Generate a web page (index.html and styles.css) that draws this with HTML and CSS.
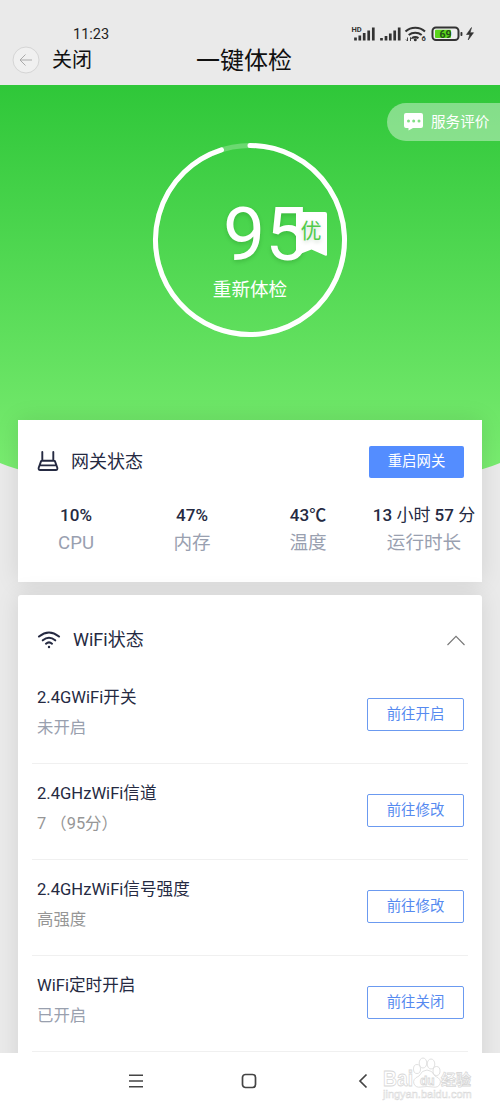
FILE: index.html
```html
<!DOCTYPE html>
<html lang="zh-CN">
<head>
<meta charset="utf-8">
<title>一键体检</title>
<link rel="stylesheet" href="styles.css">
</head>
<body>
<div class="screen">
  <header class="topbar">
    <div class="status">
      <span class="clock">11:23</span>
      <svg class="status-icons" width="126" height="20" viewBox="0 0 126 20">
        <g fill="none" stroke="#333" stroke-width="2.700">
          <path d="M4.500 13.500v3M8.800 11.500v5M13.200 9v7.500M17.700 6.500v10M22.300 3.500v13"/>
          <path d="M30.500 14v2.500M35 12v4.500M39.300 9.500v7M43.700 6.500v10M48.200 3.500v13"/>
        </g>
        <text class="tiny" x=".5" y="7.800">HD</text>
        <g fill="none" stroke="#333" stroke-width="2.100">
          <path d="M54.500 7.500a14.500 14.500 0 0 1 19.500 0M57.700 11a10.500 10.500 0 0 1 13 0M61 14.200a6 6 0 0 1 6.500 0"/>
        </g>
        <circle cx="64.300" cy="15.700" r="1.500" fill="#333"/>
        <path d="M56.500 13.500v3.500l-1.500-1.500M59.500 17v-3.500l1.300 1.500" stroke="#333" stroke-width=".9" fill="none"/>
        <text class="tiny" x="70.500" y="17">6</text>
        <rect x="81.500" y="3.500" width="26" height="12.500" rx="3.500" fill="#eee" stroke="#333" stroke-width="2"/>
        <rect x="84" y="5.700" width="16" height="8.200" rx="1" fill="#5ad51b"/>
        <rect x="109.500" y="8" width="1.900" height="4" rx=".8" fill="#333"/>
        <text class="level" x="88.500" y="13.500">69</text>
        <path d="M120.500 3.500l-5 7h3.300l-1.600 5.500 5.300-7.300h-3.400z" fill="#333" stroke="#333" stroke-width=".6"/>
      </svg>
    </div>
    <nav class="nav">
      <div class="nav-left">
        <svg width="28" height="28" viewBox="0 0 28 28" fill="none">
          <circle cx="14" cy="14" r="13" fill="#f0f0f0" stroke="#d5d5d5"/>
          <path d="M20 14H8.500M13.500 8.500L8 14l5.500 5.500" stroke="#aaa"/>
        </svg>
        <span class="close">关闭</span>
      </div>
      <h1 class="title">一键体检</h1>
    </nav>
  </header>
  <main class="content">
    <section class="hero">
      <div class="rate">
        <svg width="20" height="18" viewBox="0 0 20 18">
          <path d="M2 0h15q2 0 2 2v11q0 2-2 2H9l-4.500 2.500V15H2q-2 0-2-2V2q0-2 2-2z" fill="#fff"/>
          <g fill="#82df85"><circle cx="4.500" cy="8" r="1.500"/><circle cx="9.700" cy="8" r="1.500"/><circle cx="15" cy="8" r="1.500"/></g>
        </svg>
        <span>服务评价</span>
      </div>
      <div class="gauge">
        <svg class="ring" width="196" height="196" viewBox="0 0 196 196" fill="none" stroke="#fff" stroke-width="5">
          <circle cx="98" cy="98" r="94.500" stroke-opacity=".25"/>
          <path d="M98 3.500A94.500 94.500 0 1 1 69.500 7.900" stroke-linecap="round"/>
        </svg>
        <div class="score">95
          <svg class="ribbon" width="31" height="46" viewBox="0 0 31 46">
            <path d="M0 0h29q2 0 2 2v40.500q0 2-2 1L15.500 37.500 1.500 43Q0 44 0 42z" fill="#fff"/>
            <text class="grade" x="4.500" y="26">优</text>
          </svg>
        </div>
        <div class="again">重新体检</div>
      </div>
    </section>
    <section class="card gateway">
      <div class="card-head">
        <svg class="head-icon router" width="22" height="20" viewBox="0 0 22 20" fill="none" stroke="#252a42" stroke-width="1.900" stroke-linecap="round" stroke-linejoin="round">
          <path d="M5.300 1v8.500M16.300 1v8.500M5 9.800h12q.8 0 1.100.8l2.200 6.200q.5 2.200-1.500 2.200H3.200q-2 0-1.500-2.200l2.200-6.200q.3-.8 1.100-.8zM3.500 14.400h15"/>
        </svg>
        <h2 class="card-title">网关状态</h2>
        <button class="btn primary">重启网关</button>
      </div>
      <div class="stats">
        <div class="stat"><b>10%</b><span>CPU</span></div>
        <div class="stat"><b>47%</b><span>内存</span></div>
        <div class="stat"><b>43℃</b><span>温度</span></div>
        <div class="stat"><b>13 <i>小时</i> 57 <i>分</i></b><span>运行时长</span></div>
      </div>
    </section>
    <section class="card wifi">
      <div class="card-head wifi-head">
        <svg class="head-icon" width="24" height="18" viewBox="0 0 24 18" fill="none" stroke="#252a42" stroke-width="2.100" stroke-linecap="round">
          <path d="M2 5.500Q12-2.500 22 5.500M5.800 9.300Q12 4.200 18.200 9.300M9 12.700Q12 10.200 15 12.700"/>
          <circle cx="12" cy="16" r="1.200" fill="#252a42" stroke="none"/>
        </svg>
        <h2 class="card-title">WiFi状态</h2>
        <svg class="chevron" width="18" height="11" viewBox="0 0 18 11" fill="none" stroke="#777" stroke-width="1.100"><path d="M.5 10L9 1.300 17.500 10"/></svg>
      </div>
      <ul class="list">
        <li class="row"><div><p class="name">2.4GWiFi开关</p><p class="value">未开启</p></div><button class="btn outline">前往开启</button></li>
        <li class="row"><div><p class="name">2.4GHzWiFi信道</p><p class="value gray">7 （95分）</p></div><button class="btn outline">前往修改</button></li>
        <li class="row"><div><p class="name">2.4GHzWiFi信号强度</p><p class="value gray">高强度</p></div><button class="btn outline">前往修改</button></li>
        <li class="row"><div><p class="name">WiFi定时开启</p><p class="value">已开启</p></div><button class="btn outline">前往关闭</button></li>
      </ul>
    </section>
  </main>
  <footer class="navbar">
    <svg width="16" height="14" viewBox="0 0 16 14" stroke="#444" stroke-width="1.500"><path d="M1 1.200h14M1 7h14M1 12.800h14"/></svg>
    <svg class="home" width="16" height="16" viewBox="0 0 16 16" fill="none" stroke="#444" stroke-width="1.700"><rect x="1.500" y="1.500" width="13" height="13" rx="3"/></svg>
    <svg width="10" height="16" viewBox="0 0 10 16" fill="none" stroke="#444" stroke-width="1.700"><path d="M8.500 1.500L2 8l6.500 6.500"/></svg>
  </footer>
  <svg class="watermark" width="96" height="48" viewBox="0 0 96 48">
    <g fill="#fff" stroke="#d8d8d8">
      <text class="wm-logo" x="1" y="31" textLength="30" lengthAdjust="spacingAndGlyphs">Bai</text>
      <path d="M45 15q5 0 8 6 7 3 5 8-2 4-7 3-6-1-12 0-5 1-7-3-2-5 5-8 3-6 8-6z"/>
      <ellipse cx="35" cy="14" rx="3.500" ry="4.500"/><ellipse cx="41" cy="8" rx="3.800" ry="5"/>
      <ellipse cx="49" cy="9" rx="3.800" ry="5"/><ellipse cx="54.500" cy="16" rx="3.500" ry="4.500"/>
      <text class="wm-du" x="38" y="30">du</text>
      <text class="wm-cn" x="59" y="30">经验</text>
      <text class="wm-url" x="1" y="43">jingyan.baidu.com</text>
    </g>
  </svg>
</div>
</body>
</html>
```

FILE: styles.css
```css
* { box-sizing: border-box; margin: 0; padding: 0; }
body { font-family: Roboto, "Noto Sans CJK SC", sans-serif; color: #252a42; }
.screen { position: relative; width: 500px; height: 1111px; overflow: hidden; display: flex; flex-direction: column; background: #fff; }

.topbar { height: 85px; background: #eaeaea; padding: 24px 24px 0 12px; flex: none; }
.status { height: 20px; display: flex; justify-content: space-between; padding-left: 61px; }
.clock { font: 400 14.500px/21px Roboto, sans-serif; color: #222; }
.status-icons { display: block; font-family: Roboto, sans-serif; margin-right: -1px; }
.tiny { font-size: 7.500px; font-weight: 700; fill: #333; }
.level { font-size: 10.500px; font-weight: 700; fill: #24511a; }
.nav { display: grid; grid-template-columns: 184px 1fr; height: 28px; align-items: center; }
.nav-left { display: flex; align-items: center; gap: 12px; }
.close { font-size: 20px; line-height: 30px; color: #111; }
.title { font-size: 24px; line-height: 30px; font-weight: 400; color: #111; padding-top: 2px; }

.content { height: 968px; flex: none; overflow: hidden; background: #eaeaea; }
.hero { height: 400px; margin-bottom: -65px; padding-top: 18px; background: linear-gradient(#2fc739, #7ced72); clip-path: path("M0 0H500V378Q470 391 400 398H100Q30 391 0 378Z"); }
.rate { width: 113px; height: 38px; margin-left: auto; padding-left: 17px; border-radius: 19px 0 0 19px; background: rgba(255,255,255,.4); color: #fff; font-size: 14.600px; line-height: 40px; display: flex; align-items: center; gap: 7px; white-space: nowrap; }
.gauge { position: relative; width: 196px; height: 196px; margin: 1px auto 0 152px; padding-top: 47px; color: #fff; }
.ring { position: absolute; left: 0; top: 0; }
.score { position: relative; height: 88px; padding-left: 71px; font-size: 75px; line-height: 91px; text-shadow: 0 2px 4px rgba(0,80,0,.2); white-space: nowrap; }
.ribbon { position: absolute; left: 144px; top: 23px; }
.grade { font-size: 21px; fill: #50cb4b; }
.again { font-size: 18.600px; line-height: 28px; text-align: center; margin-top: -1px; }

.card { position: relative; width: 464px; margin: 0 auto; background: #fff; box-shadow: 0 0 22px rgba(0,0,0,.1); }
.gateway { height: 162px; padding-top: 26px; margin-bottom: 13px; }
.card-head { display: flex; align-items: center; height: 32px; padding: 0 18px 0 19px; }
.card-title { font-size: 18px; font-weight: 400; line-height: 32px; margin: 0 auto 0 12px; }
.router { margin-top: -3px; }
.btn { font: 400 14.400px/22px Roboto, "Noto Sans CJK SC", sans-serif; border-radius: 2px; border: 0; white-space: nowrap; }
.primary { width: 95px; height: 32px; padding-bottom: 1px; background: #548dff; color: #fff; }
.stats { display: grid; grid-template-columns: repeat(4, 116px); padding-top: 24px; text-align: center; }
.stat { display: grid; grid-template-rows: 27px 28px; line-height: 27px; white-space: nowrap; }
.stat b { font-size: 17px; font-weight: 500; }
.stat i { font-style: normal; font-weight: 400; }
.stat span { font-size: 18.600px; line-height: 29px; color: #99a0b0; }

.wifi { height: 480px; border-radius: 3px; padding-top: 28px; }
.wifi-head { height: 34px; }
.chevron { margin-right: -1px; }
.list { list-style: none; padding: 11px 14px 0; }
.row { display: flex; justify-content: space-between; height: 96px; padding: 15px 4px 0 5px; border-bottom: 1px solid #f0f0f0; }
.name { font-size: 16.600px; line-height: 28px; padding-top: 1px; }
.value { font-size: 16.400px; line-height: 30px; padding-top: 1px; color: #99a0ae; }
.gray { color: #969696; }
.outline { width: 97px; height: 33px; margin-top: 15px; background: #fff; border: 1px solid #6b9af0; color: #568af0; }

.navbar { height: 58px; flex: none; display: flex; align-items: center; justify-content: space-between; padding: 0 132px 3px 128px; }
.home { margin-right: 5px; }
.watermark { position: absolute; left: 382px; top: 1055px; stroke-width: .8; font-family: "Liberation Sans", "Noto Sans CJK SC", sans-serif; }
.wm-logo { font-size: 22px; font-weight: 700; }
.wm-du { font-size: 12px; font-weight: 700; }
.wm-cn { font-size: 15px; font-weight: 700; }
.wm-url { font-size: 11px; stroke-width: .5; }
```
